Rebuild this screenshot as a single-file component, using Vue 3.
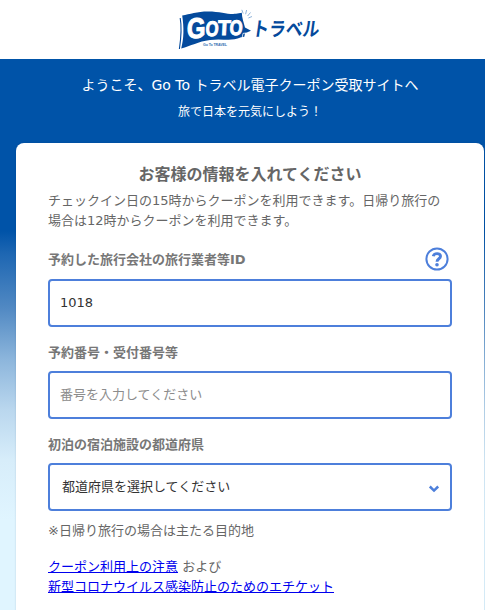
<template>
  <div class="page">
    <header class="header">
      <svg class="logo" width="150" height="44" viewBox="0 0 150 44" role="img">
        <path
          d="M4.2 6.5 C12 5 19 2.4 30 2.4 C43 2.4 50 5.7 58 4.8 L63.8 3.8 C64 9 65.5 13 67 18.5 L73 21.8 L67 24.2 L66.3 27.8 L63 28.3 C52 33 45 29 32 31 C20 32.5 13 37 3.2 39.5 C6 29 6 19 4.2 6.5 Z"
          fill="#044a9c"
        />
        <path d="M2.2 9 C4.2 20 3 29 1.4 40" fill="none" stroke="#044a9c" stroke-width="1.1" />
        <path d="M64.3 28 L65 24.4 L68.3 24" fill="none" stroke="#fff" stroke-width=".8" />
        <g class="goto" fill="#fff" stroke="#fff">
          <text transform="translate(8.8 29.6) skewX(-4) rotate(-3)" font-size="28.5" textLength="18.5" lengthAdjust="spacingAndGlyphs" stroke-width="1.1">G</text>
          <text transform="translate(27.2 27) skewX(-3)" font-size="21" textLength="13" lengthAdjust="spacingAndGlyphs" stroke-width="1">O</text>
          <text transform="translate(39.4 26.4) skewX(-3)" font-size="21" textLength="12.8" lengthAdjust="spacingAndGlyphs" stroke-width=".9">T</text>
          <text transform="translate(51.3 26.1) skewX(-3)" font-size="21" textLength="13" lengthAdjust="spacingAndGlyphs" stroke-width="1">O</text>
        </g>
        <path d="M65.2 4.5 L63.8 .8 M67.6 5.2 L68.6 1 M69.6 7 L72.5 3.5 M70.4 9 L74 7.5" stroke="#83acd6" stroke-width=".9" fill="none" />
        <text class="tiny" x="25" y="36.6" textLength="24" fill="#3a71b2">Go To TRAVEL</text>
        <text class="travel" transform="translate(73.2 27.4) skewX(-8)" textLength="67.5" lengthAdjust="spacingAndGlyphs">トラベル</text>
      </svg>
    </header>

    <main class="main">
      <div class="welcome">
        <p class="welcome-title">ようこそ、Go To トラベル電子クーポン受取サイトへ</p>
        <p class="welcome-sub">旅で日本を元気にしよう！</p>
      </div>

      <div class="card">
        <h1 class="title">お客様の情報を入れてください</h1>
        <p class="lead">
          チェックイン日の15時からクーポンを利用できます。日帰り旅行の<br />場合は12時からクーポンを利用できます。
        </p>

        <div class="field first">
          <div class="label-row">
            <label for="agency">予約した旅行会社の旅行業者等ID</label>
            <svg class="help" width="24" height="24" viewBox="0 0 24 24">
              <circle cx="12" cy="12" r="10.6" fill="none" stroke="#4d7fdb" stroke-width="2" />
              <path d="M8.3 9.3 C8.9 5.8 15.5 5.7 15.5 9.3 C15.5 11.9 12 11.7 12 14.8" fill="none" stroke="#4d7fdb" stroke-width="2.9" />
              <circle cx="12" cy="17.8" r="1.8" fill="#4d7fdb" />
            </svg>
          </div>
          <input id="agency" v-model="agencyId" class="control" type="text" />
        </div>

        <div class="field">
          <div class="label-row">
            <label for="reserve">予約番号・受付番号等</label>
          </div>
          <input id="reserve" v-model="reserveNo" class="control" type="text" placeholder="番号を入力してください" />
        </div>

        <div class="field">
          <div class="label-row">
            <label for="pref">初泊の宿泊施設の都道府県</label>
          </div>
          <div class="select-wrap">
            <select id="pref" v-model="prefecture" class="control">
              <option value="">都道府県を選択してください</option>
              <option v-for="p in prefectures" :key="p" :value="p">{{ p }}</option>
            </select>
            <svg class="arrow" width="12" height="8" viewBox="0 0 12 8">
              <path d="M1.8 1.5 L6 5.6 L10.2 1.5" fill="none" stroke="#4d7fdb" stroke-width="2.5" />
            </svg>
          </div>
        </div>

        <p class="note">※日帰り旅行の場合は主たる目的地</p>
        <p class="links">
          <a href="#">クーポン利用上の注意</a> および<br />
          <a href="#">新型コロナウイルス感染防止のためのエチケット</a>
        </p>
      </div>
    </main>
  </div>
</template>

<script setup>
import { ref } from 'vue'

const agencyId = ref('1018')
const reserveNo = ref('')
const prefecture = ref('')

const prefectures = ['北海道', '東京都', '京都府', '大阪府', '沖縄県']
</script>

<style>
body {
  margin: 0;
  overflow: hidden;
}
</style>

<style scoped>
.page {
  height: 610px;
  overflow: hidden;
  display: flex;
  flex-direction: column;
  font-family: "DejaVu Sans", "Noto Sans CJK JP", sans-serif;
  font-size: 13px;
  line-height: 20px;
  color: #666;
}

p,
h1 {
  margin: 0;
}

.header {
  flex: none;
  height: 59px;
  display: flex;
  justify-content: center;
  background: #fff;
}

.logo {
  margin: 9px 0 0 21px;
  overflow: visible;
}

.goto {
  font-family: "Liberation Sans", sans-serif;
  font-weight: 700;
}

.tiny {
  font-family: "Liberation Sans", sans-serif;
  font-size: 3.6px;
  font-weight: 700;
}

.travel {
  font-family: "Noto Sans CJK JP", sans-serif;
  font-size: 19.5px;
  font-weight: 700;
  fill: #044a9c;
}

.main {
  flex: 1;
  min-height: 0;
  padding: 0 1px 0 16px;
  background: linear-gradient(#0053a8 0, #0053a8 172px, #1d66b2 194px, #5189c3 249px, #8db6dc 301px, #bad7ee 351px, #d7edfa 401px, #e0f5ff 461px, #e0f5ff 100%);
}

.welcome {
  height: 84px;
  padding-top: 16px;
  box-sizing: border-box;
  color: #fff;
  text-align: center;
}

.welcome-title {
  font-size: 14px;
  white-space: nowrap;
}

.welcome-sub {
  margin-top: 7px;
  font-size: 12px;
}

.card {
  height: 500px;
  padding: 20px 32px 0;
  box-sizing: border-box;
  border-radius: 8px;
  box-shadow: 0 0 2px rgba(0, 40, 90, 0.2);
  background: #fff;
}

.title {
  font-size: 16px;
  line-height: 24px;
  text-align: center;
}

.lead {
  margin-top: 4px;
  white-space: nowrap;
}

.field {
  margin-top: 16px;
}

.field.first {
  margin-top: 18px;
}

.label-row {
  height: 20px;
  margin-bottom: 8px;
  display: flex;
  align-items: center;
  justify-content: space-between;
  color: #777;
  font-weight: 700;
}

.first .label-row {
  height: 22px;
}

.help {
  margin: -2px 3px 0 0;
}

.control {
  display: block;
  width: 100%;
  height: 48px;
  padding: 0 10px 2px;
  box-sizing: border-box;
  border: 2px solid #4d7fdb;
  border-radius: 4px;
  outline: none;
  appearance: none;
  background: #fff;
  color: #333;
  font-family: inherit;
  font-size: 13px;
}

.control::placeholder {
  color: #8c8c8c;
}

.select-wrap {
  position: relative;
}

select.control {
  padding-left: 12px;
}

.arrow {
  position: absolute;
  right: 12px;
  top: 22px;
}

.note {
  margin-top: 10px;
}

.links {
  margin-top: 16px;
}

.links a {
  color: #0000ee;
  text-decoration: underline;
}
</style>
